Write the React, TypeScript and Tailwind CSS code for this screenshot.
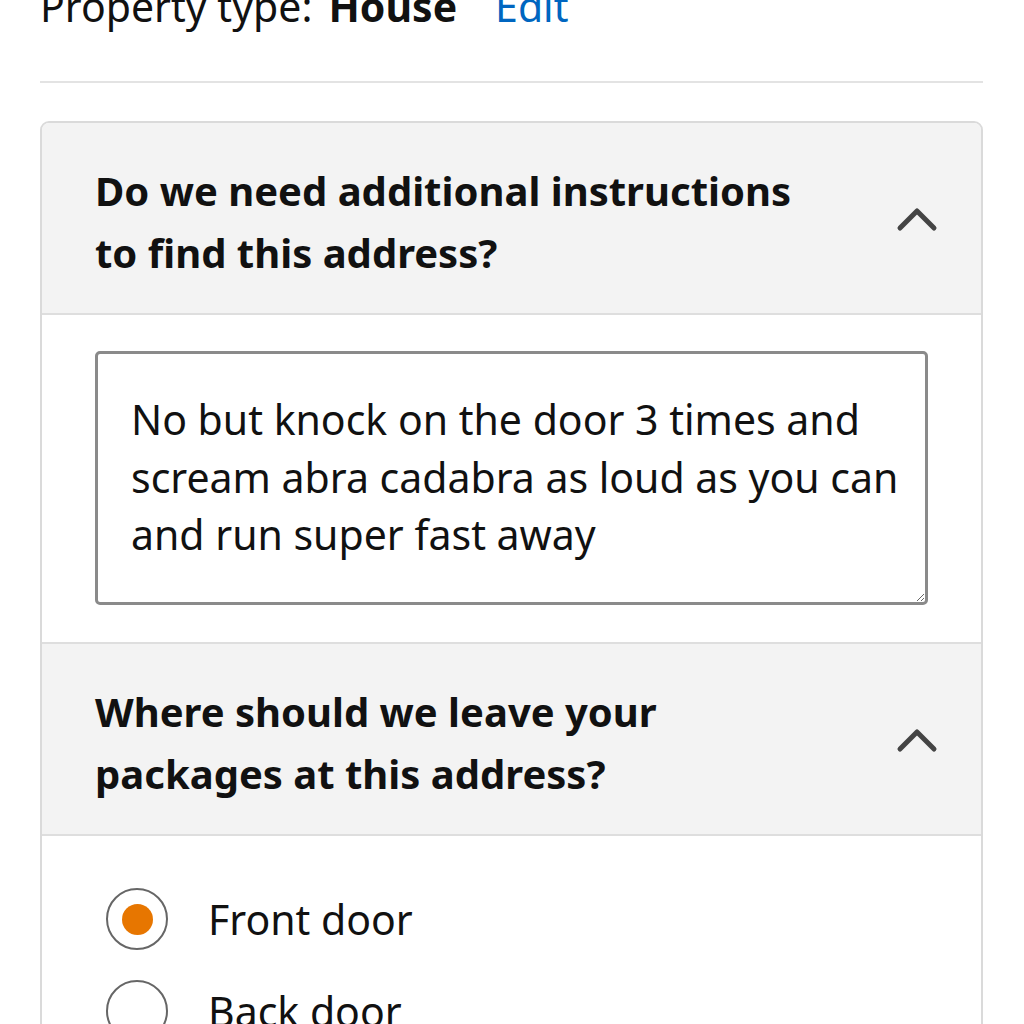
import React from "react";

function Chevron() {
  return (
    <svg width="44" height="30" viewBox="0 0 44 30" className="shrink-0 mb-[8px]">
      <polyline points="5,25 22,8 39,25" fill="none" stroke="#444" strokeWidth="5" strokeLinecap="round" strokeLinejoin="round" />
    </svg>
  );
}

function Header({ lines }: { lines: string[] }) {
  return (
    <div className="flex items-center justify-between bg-[#f3f3f3] pl-[53px] pr-[42px] pt-[37px] pb-[29px]">
      <div className="text-[40px] leading-[62px] font-bold text-[#111]">
        {lines.map((l, i) => (
          <div key={i}>{l}</div>
        ))}
      </div>
      <Chevron />
    </div>
  );
}

function Radio({ checked, label }: { checked?: boolean; label: string }) {
  return (
    <div className="flex items-center gap-[40px]">
      <div className="w-[62px] h-[62px] rounded-full border-[2px] border-[#666] flex items-center justify-center bg-white shrink-0">
        {checked && <div className="w-[31px] h-[31px] rounded-full bg-[#e77600]" />}
      </div>
      <span className="text-[41px] leading-[50px] text-[#111]">{label}</span>
    </div>
  );
}

export default function App() {
  return (
    <div className="w-[1024px] h-[1024px] overflow-hidden bg-white" style={{ fontFamily: '"Noto Sans", "Open Sans", sans-serif' }}>
      <div className="pl-[40px] pr-[41px]">
        <div className="-mt-[22px] text-[41px] leading-[56px] text-[#111] flex gap-[16px]">
          <span>Property type:</span>
          <span className="font-bold">House</span>
          <span className="text-[#0066c0] ml-[22px]">Edit</span>
        </div>
        <div className="mt-[47px] h-[2px] bg-[#e3e3e3]" />
        <div className="mt-[38px] border-[2px] border-[#dadada] rounded-[9px] overflow-hidden">
          <Header lines={["Do we need additional instructions", "to find this address?"]} />
          <div className="border-t-[2px] border-[#dedede] bg-white px-[53px] pt-[36px] pb-[37px]">
            <textarea
              readOnly
              defaultValue="No but knock on the door 3 times and scream abra cadabra as loud as you can and run super fast away"
              className="block w-full h-[254px] border-[3px] border-[#8a8a8a] rounded-[5px] pl-[33px] pr-[14px] pt-[37px] text-[41px] leading-[57.5px] text-[#111] outline-none"
              style={{ fontFamily: '"Noto Sans", "Open Sans", sans-serif' }}
            />
          </div>
          <div className="border-t-[2px] border-[#dedede]">
            <Header lines={["Where should we leave your", "packages at this address?"]} />
          </div>
          <div className="border-t-[2px] border-[#dedede] bg-white pl-[64px] pt-[52px] pb-[40px] flex flex-col gap-[30px]">
            <Radio checked label="Front door" />
            <Radio label="Back door" />
            <Radio label="Side door" />
          </div>
        </div>
      </div>
    </div>
  );
}
